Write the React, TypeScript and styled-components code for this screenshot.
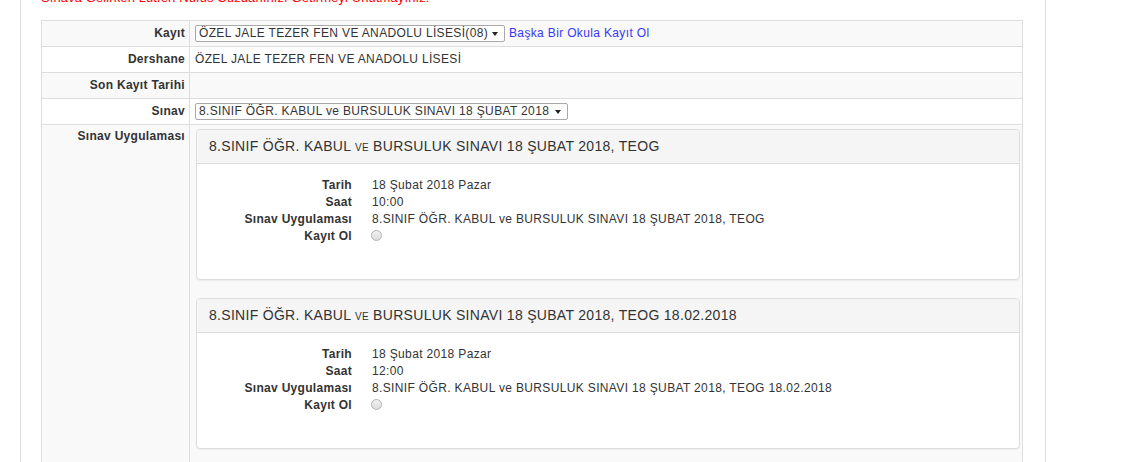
import React, { FC } from "react";
import styled, { createGlobalStyle } from "styled-components";

const GlobalStyle = createGlobalStyle`
  body {
    margin: 0;
    background: #fff;
    color: #333;
    font-family: "Liberation Sans", Arial, sans-serif;
    font-size: 12px;
    line-height: 17px;
    letter-spacing: 0.35px;
  }
`;

const Page = styled.div`
  box-sizing: border-box;
  width: 1026px;
  min-height: 100vh;
  margin-left: 20px;
  padding: 0 22px 0 20px;
  border-left: 1px solid #ddd;
  border-right: 1px solid #ddd;
  overflow: hidden;
`;

const Notice = styled.p`
  margin: -11px 0 14px;
  color: #f00;
  font-size: 13px;
  line-height: 17px;
  letter-spacing: 0.1px;
`;

const Table = styled.table`
  width: 100%;
  border-collapse: collapse;
  border: 1px solid #ddd;
`;

const Row = styled.tr`
  &:nth-child(odd) {
    background: #f9f9f9;
  }
`;

const Label = styled.th<{ $top?: boolean }>`
  width: 138px;
  padding: ${(p) => (p.$top ? "3px 4px 4px 5px" : "4px 4px 4px 5px")};
  border: 1px solid #ddd;
  text-align: right;
  vertical-align: ${(p) => (p.$top ? "top" : "middle")};
  font-weight: bold;
  letter-spacing: 0.3px;
  white-space: nowrap;
`;

const Value = styled.td<{ $panels?: boolean }>`
  height: 17px;
  padding: ${(p) => (p.$panels ? "4px 2px 0 6px" : "4px 5px")};
  border: 1px solid #ddd;
  vertical-align: ${(p) => (p.$panels ? "top" : "middle")};
`;

const Inline = styled.div`
  display: flex;
  align-items: center;
  gap: 4px;
`;

const SelectWrap = styled.span<{ $w: number }>`
  position: relative;
  display: inline-block;
  width: ${(p) => p.$w}px;
  height: 17px;

  &::after {
    content: "";
    position: absolute;
    right: 7px;
    top: 7px;
    border-left: 3px solid transparent;
    border-right: 3px solid transparent;
    border-top: 4px solid #222;
    pointer-events: none;
  }
`;

const Select = styled.select`
  appearance: none;
  box-sizing: border-box;
  width: 100%;
  height: 17px;
  margin: 0;
  padding: 0 16px 0 3px;
  border: 1px solid #a9a9a9;
  border-radius: 2px;
  background: #fff;
  color: #333;
  font-family: "Liberation Sans", Arial, sans-serif;
  font-size: 12px;
  line-height: 15px;
  letter-spacing: 0.35px;
`;

const Link = styled.a`
  color: #3838f2;
  text-decoration: none;
`;

const Panel = styled.div`
  margin-bottom: 18px;
  border: 1px solid #ddd;
  border-radius: 4px;
  background: #fff;
  box-shadow: 0 1px 1px rgba(0, 0, 0, 0.05);
`;

const PanelHeading = styled.div`
  padding: 8px 12px;
  border-bottom: 1px solid #ddd;
  border-radius: 3px 3px 0 0;
  background: #f5f5f5;
  color: #333;
  font-size: 14px;
  line-height: 17px;
  letter-spacing: 0.3px;
  font-variant: small-caps;
`;

const PanelBody = styled.div`
  padding: 13px 15px 14px;
`;

const DefList = styled.dl`
  display: grid;
  grid-template-columns: 140px 1fr;
  column-gap: 20px;
  margin: 0 0 20px;
  line-height: 17px;
`;

const Term = styled.dt`
  font-weight: bold;
  text-align: right;
  letter-spacing: 0.3px;
`;

const Desc = styled.dd`
  margin: 0;
`;

const Radio = styled.input`
  appearance: none;
  box-sizing: border-box;
  width: 11px;
  height: 11px;
  margin: 0 0 0 -1px;
  vertical-align: -1px;
  border: 1px solid #b4b4b4;
  border-radius: 50%;
  background: linear-gradient(#f2f2f2, #dcdcdc);
`;

type Exam = { title: string; date: string; time: string };

const exams: Exam[] = [
  {
    title: "8.SINIF ÖĞR. KABUL ve BURSULUK SINAVI 18 ŞUBAT 2018, TEOG",
    date: "18 Şubat 2018 Pazar",
    time: "10:00",
  },
  {
    title: "8.SINIF ÖĞR. KABUL ve BURSULUK SINAVI 18 ŞUBAT 2018, TEOG 18.02.2018",
    date: "18 Şubat 2018 Pazar",
    time: "12:00",
  },
];

const ExamPanel: FC<{ exam: Exam }> = ({ exam }) => (
  <Panel>
    <PanelHeading>{exam.title}</PanelHeading>
    <PanelBody>
      <DefList>
        <Term>Tarih</Term>
        <Desc>{exam.date}</Desc>
        <Term>Saat</Term>
        <Desc>{exam.time}</Desc>
        <Term>Sınav Uygulaması</Term>
        <Desc>{exam.title}</Desc>
        <Term>Kayıt Ol</Term>
        <Desc>
          <Radio type="radio" name="sinav" />
        </Desc>
      </DefList>
    </PanelBody>
  </Panel>
);

const App: FC = () => {
  return (
    <>
      <GlobalStyle />
      <Page>
        <Notice>Sınava Gelirken Lütfen Nüfus Cüzdanınızı Getirmeyi Unutmayınız!</Notice>
        <Table>
          <tbody>
            <Row>
              <Label>Kayıt</Label>
              <Value>
                <Inline>
                  <SelectWrap $w={310}>
                    <Select defaultValue="08">
                      <option value="08">ÖZEL JALE TEZER FEN VE ANADOLU LİSESİ(08)</option>
                    </Select>
                  </SelectWrap>
                  <Link href="#">Başka Bir Okula Kayıt Ol</Link>
                </Inline>
              </Value>
            </Row>
            <Row>
              <Label>Dershane</Label>
              <Value>ÖZEL JALE TEZER FEN VE ANADOLU LİSESİ</Value>
            </Row>
            <Row>
              <Label>Son Kayıt Tarihi</Label>
              <Value />
            </Row>
            <Row>
              <Label>Sınav</Label>
              <Value>
                <SelectWrap $w={373}>
                  <Select defaultValue="1">
                    <option value="1">8.SINIF ÖĞR. KABUL ve BURSULUK SINAVI 18 ŞUBAT 2018</option>
                  </Select>
                </SelectWrap>
              </Value>
            </Row>
            <Row>
              <Label $top>Sınav Uygulaması</Label>
              <Value $panels>
                {exams.map((e) => (
                  <ExamPanel key={e.title} exam={e} />
                ))}
              </Value>
            </Row>
          </tbody>
        </Table>
      </Page>
    </>
  );
};

export default App;
